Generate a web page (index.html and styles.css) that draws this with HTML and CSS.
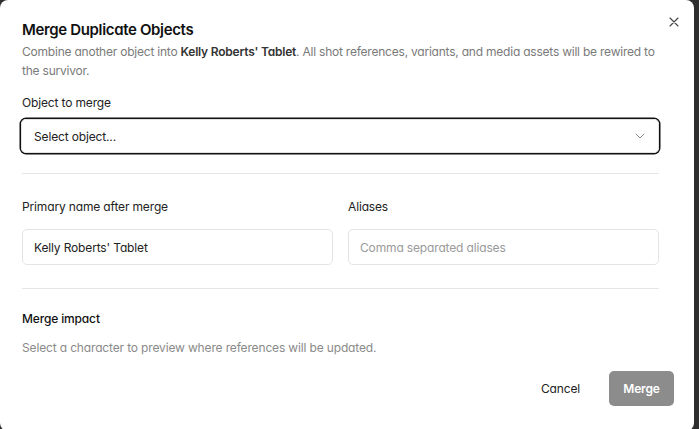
FILE: index.html
```html
<!DOCTYPE html>
<html>
<head>
<meta charset="utf-8">
<link rel="stylesheet" href="styles.css">
</head>
<body>
<div class="dialog">
  <button class="close" aria-label="Close">
    <svg width="10" height="10" viewBox="0 0 10 10"><path d="M1 1L9 9M9 1L1 9" stroke="#444" stroke-width="1.1" stroke-linecap="round"/></svg>
  </button>
  <div class="content">
    <h2 class="title">Merge Duplicate Objects</h2>
    <p class="desc">Combine another object into <strong>Kelly Roberts' Tablet</strong>. All shot references, variants, and media assets will be rewired to the survivor.</p>
    <div class="field first">
      <label class="label">Object to merge</label>
      <div class="select">
        <span>Select object...</span>
        <svg width="10" height="6" viewBox="0 0 10 6"><path d="M1 1L5 5L9 1" fill="none" stroke="#888" stroke-width="1" stroke-linecap="round" stroke-linejoin="round"/></svg>
      </div>
    </div>
    <hr class="divider d1">
    <div class="grid">
      <div class="field">
        <label class="label">Primary name after merge</label>
        <div class="input">Kelly Roberts' Tablet</div>
      </div>
      <div class="field">
        <label class="label">Aliases</label>
        <div class="input placeholder">Comma separated aliases</div>
      </div>
    </div>
    <hr class="divider d2">
    <h3 class="impact">Merge impact</h3>
    <p class="impact-text">Select a character to preview where references will be updated.</p>
  </div>
  <div class="footer">
    <button class="btn cancel">Cancel</button>
    <button class="btn merge">Merge</button>
  </div>
</div>
</body>
</html>
```

FILE: styles.css
```css
* { box-sizing: border-box; }
html, body { margin: 0; padding: 0; }
body {
  background: #2e2e2e;
  width: 699px;
  height: 429px;
  overflow: hidden;
  font-family: Inter, "Noto Sans", sans-serif;
  font-feature-settings: "cv11";
  color: #1a1a1a;
}
.dialog {
  position: relative;
  width: 694px;
  height: 431px;
  background: #fff;
  border-radius: 8px;
  display: flex;
  flex-direction: column;
}
.close {
  position: absolute;
  top: 17px;
  left: 669px;
  width: 10px;
  height: 10px;
  padding: 0;
  border: 0;
  background: none;
  display: flex;
}
.content {
  padding: 20px 35px 0 22px;
  display: flex;
  flex-direction: column;
}
.title {
  margin: 0;
  font-size: 15px;
  line-height: 20px;
  font-weight: 600;
  letter-spacing: -0.35px;
  color: #111;
}
.desc {
  margin: 2px 0 0;
  font-size: 12px;
  line-height: 19px;
  color: #7a7a7a;
  letter-spacing: -0.22px;
}
.desc strong { font-weight: 600; color: #333; }
.field { display: flex; flex-direction: column; }
.field.first { margin-top: 15px; }
.label {
  font-size: 12px;
  line-height: 16px;
  color: #222;
  letter-spacing: -0.15px;
}
.select {
  margin-top: 8px;
  height: 34px;
  margin-left: -1px;
  border: 1px solid #e2e2e2;
  border-radius: 5px;
  box-shadow: 0 0 0 1.5px #111;
  display: flex;
  align-items: center;
  justify-content: space-between;
  padding: 0 13px 0 12px;
  font-size: 12px;
  color: #222;
  letter-spacing: -0.15px;
}
.divider {
  border: 0;
  border-top: 1px solid #e6e6e6;
  margin: 0;
}
.d1 { margin-top: 20px; }
.grid {
  margin-top: 25px;
  display: grid;
  grid-template-columns: 1fr 1fr;
  gap: 15px;
}
.grid .input { margin-top: 14px; }
.input {
  height: 36px;
  border: 1px solid #e4e4e4;
  border-radius: 5px;
  display: flex;
  align-items: center;
  padding: 0 11px;
  font-size: 12px;
  color: #222;
  letter-spacing: -0.15px;
}
.input.placeholder { color: #9a9a9a; }
.d2 { margin-top: 23px; }
.impact {
  margin: 22px 0 0;
  font-size: 12px;
  line-height: 16px;
  font-weight: 500;
  color: #111;
  letter-spacing: -0.15px;
}
.impact-text {
  margin: 13px 0 0;
  font-size: 12px;
  line-height: 16px;
  color: #8a8a8a;
  letter-spacing: -0.15px;
}
.footer {
  margin-top: auto;
  padding: 0 20px 25px 0;
  display: flex;
  justify-content: flex-end;
  align-items: center;
  gap: 9px;
}
.btn {
  font-family: inherit;
  font-feature-settings: "cv11";
  font-size: 12px;
  border: 0;
  height: 35px;
  border-radius: 5px;
  letter-spacing: -0.15px;
}
.cancel {
  background: none;
  color: #222;
  padding: 0 20px;
}
.merge {
  background: #8c8c8c;
  color: #fff;
  font-weight: 600;
  padding: 0 10px;
  width: 65px;
}
```
